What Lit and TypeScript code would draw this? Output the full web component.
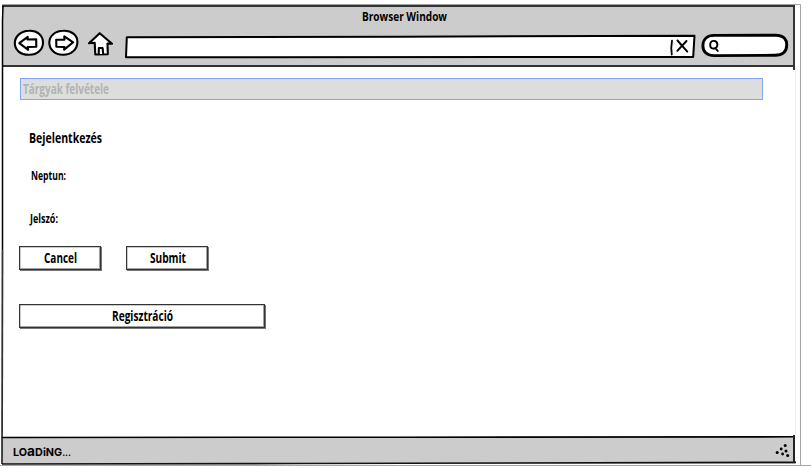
import { LitElement, html, css, svg } from "lit";
import { customElement, property } from "lit/decorators.js";

/** Text condensed to a fixed advance width, like the sketch typeface. */
@customElement("sketch-label")
class SketchLabel extends LitElement {
  @property() text = "";
  @property({ type: Number }) width = 50;
  @property({ type: Number }) size = 13;

  static styles = css`
    :host { display: block; height: 20px; flex: none; }
    svg { display: block; overflow: visible; }
    text { font-family: "Open Sans", "Noto Sans", sans-serif; font-weight: 700; fill: currentColor; }
  `;

  render() {
    return html`<svg width=${this.width} height="20">
      <text x="0" y="15" font-size=${this.size} textLength=${this.width} lengthAdjust="spacingAndGlyphs">${this.text}</text>
    </svg>`;
  }
}

const frame = svg`
  <path d="M2 4.5H800.5V465" stroke="#a3a3a3" stroke-width="1"/>
  <path d="M795.5 70V435" stroke="#eeeeee" stroke-width="1"/>
  <path d="M0 465.5H811" stroke="#88b0bd" stroke-width="1"/>
  <path d="M2 6H795" stroke="#333" stroke-width="2"/>
  <path d="M3 66H795" stroke="#333" stroke-width="2"/>
  <path d="M794 5V70" stroke="#333" stroke-width="2"/>
  <path d="M3 6L2.5 20V250" stroke="#000" stroke-width="1.5"/>
  <path d="M2.5 250L2 464" stroke="#333" stroke-width="1.8"/>
  <path d="M2 437.5L400 437.2L795 436.8" stroke="#000" stroke-width="1.6"/>
  <path d="M2 464L300 463.5L796 462.3" stroke="#111" stroke-width="1.7"/>
  <path d="M794 435V463" stroke="#222" stroke-width="2"/>
`;

@customElement("app-root")
class AppRoot extends LitElement {
  static styles = css`
    :host { display: block; width: 811px; height: 468px; background: #fff; color: #000; overflow: hidden; position: relative; }
    * { box-sizing: border-box; }
    svg { display: block; overflow: visible; fill: none; flex: none; }
    .window { display: flex; flex-direction: column; width: 793px; height: 464px; margin-left: 2px; }
    .header { height: 67px; padding-top: 6px; background: #ccc; flex: none; clip-path: inset(5px 0 0 0); }
    .title { display: flex; padding-left: 360px; height: 20px; }
    .tools { display: flex; height: 41px; }
    .page { flex: 1; padding: 11px 0 0 18px; display: flex; flex-direction: column; align-items: flex-start; }
    .banner { width: 743px; height: 22px; border: 1px solid #83a7f3; background: #ddd; color: #adb5b2; padding-left: 2px; }
    .heading { margin: 28px 0 0 9px; }
    .neptun { margin: 17px 0 0 11px; }
    .jelszo { margin: 23px 0 0 10px; }
    .row { display: flex; gap: 25px; margin: 18px 0 0 -1px; }
    .button { display: flex; justify-content: center; width: 82px; height: 24px; padding: 1px 0 0 1px; margin-bottom: 1px;
      border: 1px solid #333; background: #fff; box-shadow: inset 0 0 0 0.5px #999, inset -1px -1px 0 #aaa, 1px 1px 0 #777; }
    .wide { width: 246px; margin: 33px 0 0 -1px; padding-left: 0; }
    .status { height: 27px; flex: none; background: #ccc; display: flex; justify-content: space-between; padding: 5px 5px 0 11px; }
    .status text { font-family: "Inter", "Liberation Sans", sans-serif; font-weight: 700; fill: #000; }
    .frame { position: absolute; left: 0; top: 0; pointer-events: none; }
  `;

  render() {
    return html`
      <div class="window">
        <div class="header">
          <div class="title"><sketch-label text="Browser Window" width="85" size="13"></sketch-label></div>
          <div class="tools">
            <svg width="793" height="41" viewBox="2 26 793 41" stroke="#000" stroke-linejoin="round" stroke-linecap="round">
              <g fill="#fff" stroke-width="2.1">
                <path d="M29 30.8C37 30.2 43 35.5 43 42.5C43 50 37 55 29 54.8C20.5 55 14.8 50 14.8 43C15 36 21 31 29 30.8Z"/>
                <path d="M63 30.8C71.5 30.2 77.5 35 77.4 42C77.4 49.5 71 55 63 54.8C55 55 49.3 49.5 49.3 42.5C49.5 36 55 31 63 30.8Z"/>
                <path d="M19.3 43.2L27.7 36.8L27.5 39.5L36.2 39.2L36.3 46.7L27.7 47L28.2 49.8Z"/>
                <path d="M73.2 42.3L64.3 36.3L64.5 39.6L56.2 39.8L56.4 46.8L64.5 47L64.1 49.6Z"/>
                <path d="M99.7 33.2L89 43.2L94.7 42.8L95.3 54.5L107.8 54.3L107.5 43.6L112 43.7Z"/>
                <path d="M98.8 54V48H102.6L103.2 54" />
              </g>
              <path d="M126.8 37.2L400 36.7L694.5 35.8L693.2 56.9L126 57.2Z" fill="#fff" stroke-width="2"/>
              <path d="M672 40.7Q670.7 48 671.8 54.5" stroke-width="1.8"/>
              <path d="M677.5 40.5L687.3 51.6M686.5 41L677.3 50.8" stroke-width="1.9"/>
              <path d="M714 35.4L776 35.2C784 35.2 787 40 786.7 45.5C786.5 52 782 55.2 775 55.3L714 55.6C706 55.6 702.8 51 702.9 45.5C703 39.5 707 35.5 714 35.4Z" fill="#fff" stroke-width="2.9"/>
              <path d="M713.5 40.9C711 41 710 43 710.2 45.4C710.4 48 712 48.8 714 48.5C716.3 48.2 717.5 46.8 717.4 44.3C717.2 42 716 40.8 713.5 40.9ZM715.6 48.3L717.8 51" stroke-width="1.9"/>
            </svg>
          </div>
        </div>
        <div class="page">
          <div class="banner"><sketch-label text="Tárgyak felvétele" width="86" size="13.5"></sketch-label></div>
          <sketch-label class="heading" text="Bejelentkezés" width="73" size="14"></sketch-label>
          <sketch-label class="neptun" text="Neptun:" width="35" size="11.5"></sketch-label>
          <sketch-label class="jelszo" text="Jelszó:" width="28" size="11.5"></sketch-label>
          <div class="row">
            <div class="button"><sketch-label text="Cancel" width="33" size="13.5"></sketch-label></div>
            <div class="button"><sketch-label text="Submit" width="36" size="13.5"></sketch-label></div>
          </div>
          <div class="button wide"><sketch-label text="Regisztráció" width="61" size="13.5"></sketch-label></div>
        </div>
        <div class="status">
          <svg width="59" height="20"><text x="0" y="14" font-size="11" textLength="58" lengthAdjust="spacingAndGlyphs">LO<tspan font-size="14">a</tspan>DiNG<tspan font-size="9">...</tspan></text></svg>
          <svg width="14" height="20" viewBox="776 442 14 20" fill="#000">
            <g fill="#000"><circle cx="785.2" cy="445.5" r="1.5"/><circle cx="781.2" cy="449" r="1.4"/><circle cx="786" cy="451" r="1.5"/><circle cx="777.2" cy="452.6" r="1.5"/><circle cx="782.6" cy="454" r="1.4"/><circle cx="787.7" cy="455.6" r="1.5"/></g>
          </svg>
        </div>
      </div>
      <svg class="frame" width="811" height="468">${frame}</svg>
    `;
  }
}
